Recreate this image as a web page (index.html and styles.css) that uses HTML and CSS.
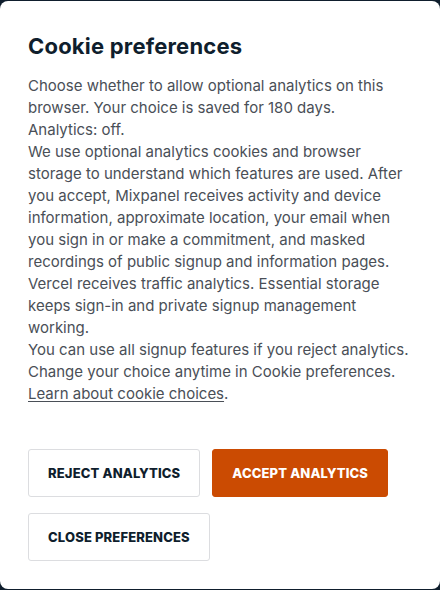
FILE: index.html
```html
<!DOCTYPE html>
<html lang="en">
<head>
<meta charset="utf-8">
<title>Cookie preferences</title>
<link rel="stylesheet" href="styles.css">
</head>
<body>
<div class="dialog" role="dialog" aria-labelledby="cp-title">
  <h2 id="cp-title" class="title">Cookie preferences</h2>
  <div class="body">
    <p>Choose whether to allow optional analytics on this browser. Your choice is saved for 180 days.</p>
    <p>Analytics: off.</p>
    <p>We use optional analytics cookies and browser storage to understand which features are used. After you accept, Mixpanel receives activity and device information, approximate location, your email when you sign in or make a commitment, and masked recordings of public signup and information pages. Vercel receives traffic analytics. Essential storage keeps sign-in and private signup management working.</p>
    <p>You can use all signup features if you reject analytics. Change your choice anytime in Cookie preferences. <a href="#" class="link">Learn about cookie choices</a>.</p>
  </div>
  <div class="actions">
    <button class="btn btn-outline">Reject analytics</button>
    <button class="btn btn-primary">Accept analytics</button>
    <button class="btn btn-outline">Close preferences</button>
  </div>
</div>
</body>
</html>
```
FILE: styles.css
```css
html, body {
  margin: 0;
  padding: 0;
  background: #0f1e2d;
}
body {
  padding: 1px 0;
  font-family: Inter, "Noto Sans", sans-serif;
}
.dialog {
  box-sizing: border-box;
  height: 588px;
  background: #ffffff;
  border-radius: 8px;
  padding: 30px 28px 28px;
}
.title {
  margin: 0 0 14px;
  font-family: Inter, sans-serif;
  font-weight: 700;
  font-size: 22px;
  line-height: 30px;
  color: #0f1e2d;
  letter-spacing: 0.2px;
}
.body {
  color: #4a4f57;
  font-size: 15px;
  line-height: 22px;
}
.body p {
  margin: 0;
}
.link {
  color: #4a4f57;
  text-decoration: underline;
  text-underline-offset: 2px;
}
.actions {
  display: flex;
  flex-wrap: wrap;
  gap: 16px 12px;
  margin-top: 44px;
}
.btn {
  box-sizing: border-box;
  height: 48px;
  padding: 0 19px;
  border-radius: 3px;
  font-family: Inter, sans-serif;
  font-weight: 800;
  font-size: 13px;
  line-height: 1;
  letter-spacing: 0.15px;
  text-transform: uppercase;
  cursor: pointer;
}
.btn-outline {
  background: #ffffff;
  border: 1px solid #dcdde0;
  color: #0f1e2d;
}
.btn-primary {
  background: #cb4b02;
  border: 1px solid #cb4b02;
  color: #ffffff;
}
```
